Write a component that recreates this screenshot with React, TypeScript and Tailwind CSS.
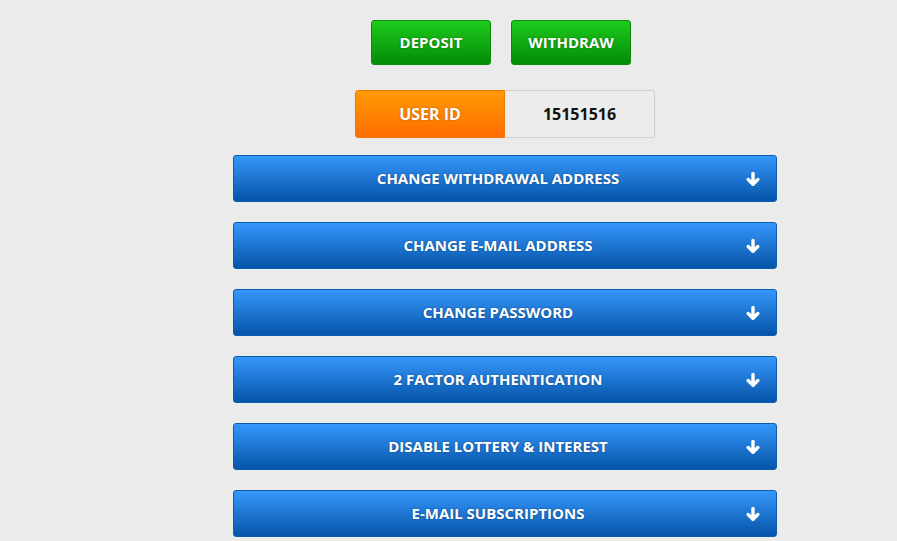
import React from 'react';

const sections = [
  'Change withdrawal address',
  'Change e-mail address',
  'Change password',
  '2 factor authentication',
  'Disable lottery & interest',
  'E-mail subscriptions',
];

const font = { fontFamily: '"Open Sans", "Liberation Sans", sans-serif' };

function DownArrow() {
  return (
    <svg
      width="14"
      height="15"
      viewBox="0 0 14 15"
      className="absolute right-[16px] top-1/2 -translate-y-1/2"
      fill="none"
      stroke="white"
      strokeWidth="3.4"
      strokeLinecap="round"
      strokeLinejoin="round"
    >
      <path d="M7 2v10.5" />
      <path d="M2.2 8l4.8 4.8L11.8 8" />
    </svg>
  );
}

export default function App() {
  return (
    <div className="min-h-screen w-full bg-[#ebebeb] overflow-hidden" style={font}>
      <div className="ml-[233px] w-[544px] pt-5 flex flex-col items-center">
        {/* Deposit / Withdraw */}
        <div className="flex gap-5 mr-2">
          <button className="w-[120px] h-[45px] rounded-[3px] border border-[#0d8a0d] bg-gradient-to-b from-[#1ccb1c] to-[#058c08] text-white font-bold text-[15px] [text-shadow:0_0_2px_rgba(0,0,0,0.4)]">
            DEPOSIT
          </button>
          <button className="w-[120px] h-[45px] rounded-[3px] border border-[#0d8a0d] bg-gradient-to-b from-[#1ccb1c] to-[#058c08] text-white font-bold text-[15px] [text-shadow:0_0_2px_rgba(0,0,0,0.4)]">
            WITHDRAW
          </button>
        </div>

        {/* User ID */}
        <div className="flex mt-[25px] h-[48px] w-[300px]">
          <div className="w-[150px] flex items-center justify-center rounded-l-[3px] border border-[#f07a00] bg-gradient-to-b from-[#ff9a06] to-[#ff6c00] text-white font-bold text-[16px] [text-shadow:0_0_2px_rgba(0,0,0,0.3)]">
            USER ID
          </div>
          <div className="w-[150px] flex items-center justify-center rounded-r-[3px] border border-l-0 border-[#cfcfcf] bg-[#ececec] text-[#111] font-bold text-[16px]">
            15151516
          </div>
        </div>

        {/* Sections */}
        <div className="w-full flex flex-col gap-[20px] mt-[17px]">
          {sections.map((s) => (
            <div
              key={s}
              className="relative h-[47px] w-full pr-[14px] rounded-[3px] border border-[#0b5db0] bg-gradient-to-b from-[#3597fb] to-[#0455a9] flex items-center justify-center text-white font-bold text-[15px] uppercase [text-shadow:0_0_2px_rgba(0,0,0,0.4)]"
            >
              <span>{s}</span>
              <DownArrow />
            </div>
          ))}
        </div>
      </div>
    </div>
  );
}
